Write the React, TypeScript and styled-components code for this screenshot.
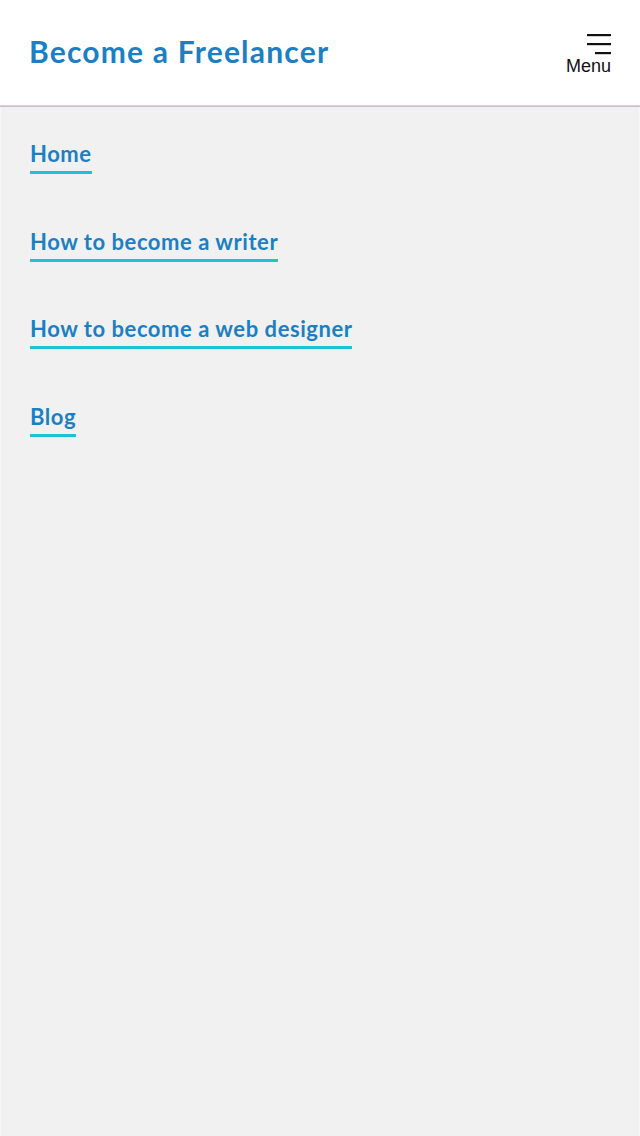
import styled, { createGlobalStyle } from 'styled-components';

const GlobalStyle = createGlobalStyle`
    html, body {
        margin: 0;
        padding: 0;
        background: #f1f1f1;
    }
    * {
        box-sizing: border-box;
    }
`;

const Page = styled.div`
    min-height: 1136px;
    background: #f1f1f1;
    border-left: 1px solid #f7f7f7;
    border-right: 1px solid #f7f7f7;
`;

const Header = styled.header`
    height: 106px;
    display: flex;
    align-items: center;
    justify-content: space-between;
    padding: 0 29px 0 29px;
    background: #ffffff;
    border-bottom: 1px solid #b8e2ea;
    box-shadow: 0 1px 0 #c4c4c4;
    margin: 0 -1px;
`;

const Title = styled.a`
    font-family: Lato, "Noto Sans", sans-serif;
    font-weight: 700;
    font-size: 30px;
    color: #1c7fc3;
    text-decoration: none;
    letter-spacing: 1.2px;
    margin-top: -4px;
`;

const MenuButton = styled.button`
    display: flex;
    flex-direction: column;
    align-items: flex-end;
    background: none;
    border: none;
    padding: 0;
    margin-top: 4px;
    cursor: pointer;
`;

const MenuLabel = styled.span`
    font-family: "Liberation Sans", Arial, sans-serif;
    font-size: 18px;
    color: #111111;
    line-height: 20px;
    margin-top: 1px;
`;

const Nav = styled.nav`
    display: flex;
    flex-direction: column;
    align-items: flex-start;
    padding: 34px 29px 0;
    gap: 53.5px;
`;

const NavLink = styled.a`
    font-family: Lato, "Noto Sans", sans-serif;
    font-weight: 700;
    font-size: 22px;
    line-height: 27px;
    color: #1c7fc3;
    text-decoration: none;
    padding-bottom: 4px;
    border-bottom: 3px solid #1ec2d8;
    letter-spacing: 0.55px;
`;

const links = [
    'Home',
    'How to become a writer',
    'How to become a web designer',
    'Blog',
];

const MenuIcon = () => (
    <svg width="25" height="21" viewBox="0 0 25 21">
        <rect x="1" y="0" width="24" height="2.2" fill="#111" />
        <rect x="1" y="9" width="24" height="2.2" fill="#111" />
        <rect x="9" y="18" width="16" height="2.2" fill="#111" />
    </svg>
);

const App = () => (
    <Page>
        <GlobalStyle />
        <Header>
            <Title href="#">Become a Freelancer</Title>
            <MenuButton>
                <MenuIcon />
                <MenuLabel>Menu</MenuLabel>
            </MenuButton>
        </Header>
        <Nav>
            {links.map((link) => (
                <NavLink key={link} href="#">{link}</NavLink>
            ))}
        </Nav>
    </Page>
);

export default App;
